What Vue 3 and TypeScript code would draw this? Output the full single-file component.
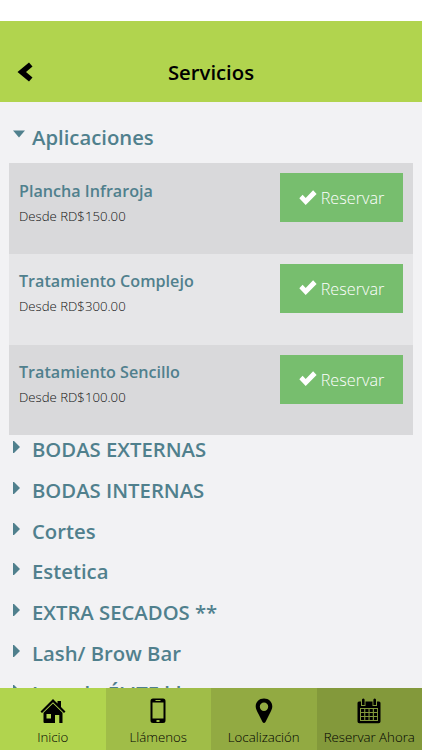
<script setup lang="ts">
interface Service { name: string; price: string }
const services: Service[] = [
  { name: 'Plancha Infraroja', price: 'Desde RD$150.00' },
  { name: 'Tratamiento Complejo', price: 'Desde RD$300.00' },
  { name: 'Tratamiento Sencillo', price: 'Desde RD$100.00' },
]
const categories: string[] = ['BODAS EXTERNAS', 'BODAS INTERNAS', 'Cortes', 'Estetica', 'EXTRA SECADOS **', 'Lash/ Brow Bar', 'Lavado ÉLITE kl']
</script>

<template>
  <div class="screen">
    <div class="status"></div>
    <header class="header">
      <button class="back" aria-label="Volver">
        <svg width="16" height="20" viewBox="0 0 16 20"><path d="M12 0.5 15.5 4.5 9 10 15.5 15.5 12 19.5 0.5 10Z" /></svg>
      </button>
      <h1>Servicios</h1>
    </header>
    <main class="content">
      <h2 class="category open">
        <svg class="arrow" width="12" height="8" viewBox="0 0 12 8"><path d="M0 .5H12L6 7.5Z" /></svg>
        <span>Aplicaciones</span>
      </h2>
      <section class="services">
        <article v-for="s in services" :key="s.name" class="service">
          <div>
            <h3>{{ s.name }}</h3>
            <p>{{ s.price }}</p>
          </div>
          <button class="reserve">
            <svg width="18" height="16" viewBox="0 0 18 16"><path d="M0.3 8.3 3.6 4.8 6.7 7.900 14.1 0.3 17.6 3.9 6.7 15Z" /></svg>
            <span>Reservar</span>
          </button>
        </article>
      </section>
      <h2 v-for="c in categories" :key="c" class="category">
        <svg class="arrow" width="12" height="12" viewBox="0 0 12 12"><path d="M0 0H1L7 6 1 12H0Z" /></svg>
        <span>{{ c }}</span>
      </h2>
    </main>
    <nav class="tabs">
      <a class="tab">
        <svg width="26" height="26" viewBox="0 0 26 26"><path d="M13 1 17.5 5.5V3H21V9L25.5 13.5 24 15 13 4.3 2 15 .5 13.5Z" /><path fill-rule="evenodd" d="M13 5.500 22.500 14.800V25H19.300V17H15V25H4.500Q3.500 25 3.500 24V14.800ZM6.500 16V20.500H11V16Z" /></svg>
        <span>Inicio</span>
      </a>
      <a class="tab">
        <svg width="26" height="26" viewBox="0 0 26 26"><path fill-rule="evenodd" d="M8 0.500H18Q20.500 .5 20.500 3V22.500Q20.500 25 18 25H8Q5.500 25 5.500 22.500V3Q5.500 .5 8 .5ZM7.500 4.500V20.500H18.500V4.500ZM10.500 2V3H15.500V2ZM11.500 22V24H14.500V22Z" /></svg>
        <span>Llámenos</span>
      </a>
      <a class="tab">
        <svg width="26" height="26" viewBox="0 0 26 26"><path fill-rule="evenodd" d="M13 .5C17.800 .5 21.300 4 21.300 8.500C21.300 11 20 13 18.500 16L14.500 24Q13 26 11.500 24L7.500 16C6 13 4.700 11 4.700 8.500C4.700 4 8.200 .5 13 .5ZM13 4.500A4.200 4.200 0 1 0 13 12.900A4.200 4.200 0 1 0 13 4.500Z" /></svg>
        <span>Localización</span>
      </a>
      <a class="tab">
        <svg width="26" height="26" viewBox="0 0 26 26"><path fill-rule="evenodd" d="M3 3.500H5V8H9.500V3.500H16.500V8H21V3.500H23Q24.500 3.500 24.500 5V23.500Q24.500 25.300 22.700 25.300H3.300Q1.500 25.300 1.500 23.500V5Q1.500 3.500 3 3.500ZM4 10V23H22V10Z" /><path d="M6 1.500Q7.300 -.4 8.600 1.500V7H6ZM17.400 1.500Q18.700 -.4 20 1.500V7H17.400ZM5 11H8.200V14H5ZM9.300 11H12.500V14H9.300ZM13.600 11H16.800V14H13.600ZM17.900 11H21.100V14H17.900ZM5 15H8.200V18H5ZM9.300 15H12.500V18H9.300ZM13.600 15H16.800V18H13.600ZM17.900 15H21.100V18H17.900ZM5 19H8.200V22H5ZM9.300 19H12.500V22H9.300ZM13.600 19H16.800V22H13.600ZM17.900 19H21.100V22H17.900Z" /></svg>
        <span>Reservar Ahora</span>
      </a>
    </nav>
  </div>
</template>

<style>
html, body { overflow: hidden; background: #fff; }
</style>

<style scoped>
.screen { width: 422px; height: 750px; display: flex; flex-direction: column; background: #f2f2f4; overflow: hidden; font-family: "Open Sans", sans-serif; }
.status { height: 21px; flex: none; background: #fff; }
.header { height: 81px; flex: none; box-sizing: border-box; padding: 35px 17px 0; display: grid; grid-template-columns: 20px 1fr 20px; background: #b1d44e; }
h1, h2, h3, p { margin: 0; }
h1 { font-size: 20.300px; line-height: 33px; font-weight: 600; text-align: center; color: #000; }
button { border: 0; border-radius: 0; padding: 0; font: inherit; background: none; }
.back { height: 31px; display: flex; align-items: center; }
.content { flex: 1; min-height: 0; overflow: hidden; padding: 15px 9px 0; }
.category { display: flex; height: 40.700px; padding-left: 4px; color: #50808d; font-size: 20.300px; font-weight: 600; line-height: 28px; white-space: nowrap; }
.category.open { height: 46.400px; line-height: 41px; }
.arrow { flex: none; margin: 6px 7px 0 0; fill: #50808d; }
.open .arrow { margin-top: 13px; }
.services { height: 271.800px; display: grid; grid-template-rows: repeat(3, 1fr); }
.service { display: flex; justify-content: space-between; padding: 10px; background: #d9d9db; }
.service:nth-child(even) { background: #e6e6e8; }
h3 { margin-top: 5.500px; font-size: 16.150px; line-height: 24px; font-weight: 600; color: #50808d; }
p { margin-top: 3px; font-size: 13.200px; line-height: 20px; font-weight: 300; color: #111; }
.reserve { width: 123px; height: 49px; display: flex; justify-content: center; gap: 4px; background: #77be6e; color: #fff; font-size: 16.200px; line-height: 51px; font-weight: 300; }
.reserve svg { fill: #fff; margin-top: 16.500px; }
.tabs { height: 62px; flex: none; display: grid; grid-template-columns: repeat(4, 1fr); }
.tab { display: flex; flex-direction: column; align-items: center; padding-top: 10px; box-sizing: border-box; font-size: 13.250px; line-height: 20px; font-weight: 300; color: #000; white-space: nowrap; background: #b1d44e; }
.tab:nth-child(2) { background: #a0bd48; }
.tab:nth-child(3) { background: #92aa42; }
.tab:nth-child(4) { background: #83993b; }
.tab svg { flex: none; }
.tab span { margin-top: 3px; }
</style>
